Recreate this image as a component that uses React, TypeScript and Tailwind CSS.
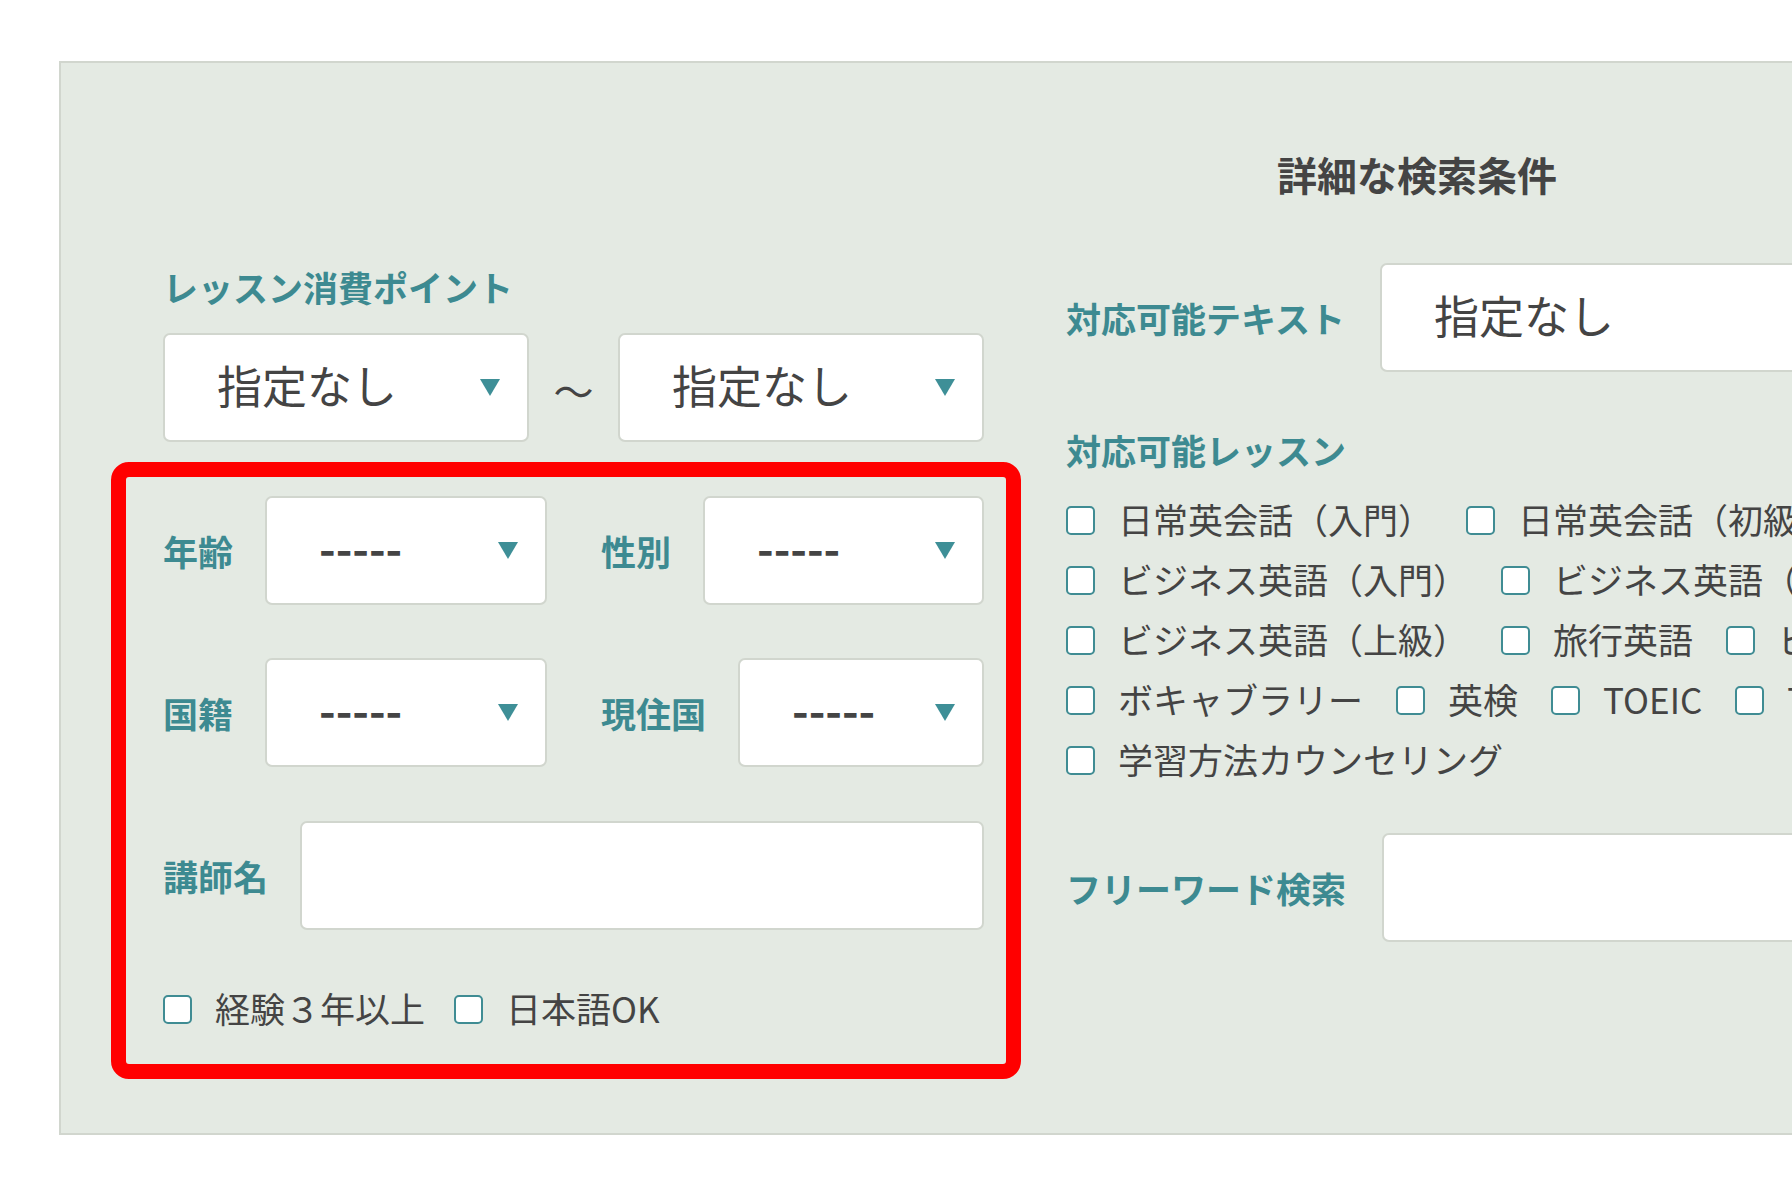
import React from 'react';

const font = "font-['Noto_Sans_CJK_JP','Noto_Sans',sans-serif]";

function Caret() {
  return (
    <svg width="20" height="17" viewBox="0 0 20 17" className="shrink-0">
      <path d="M0 0H20L10 17Z" fill="#3e8f97" />
    </svg>
  );
}

function Select({ value, className = '', dashes = false }: { value: string; className?: string; dashes?: boolean }) {
  return (
    <div className={`h-[109px] bg-white border-2 border-[#d1d6ce] rounded-[7px] flex items-center pl-[52px] pr-[27px] ${className}`}>
      <span className={`flex-1 whitespace-nowrap text-[#444] leading-none text-[45px] ${dashes ? 'font-semibold pb-[8px]' : 'pb-[6px]'}`}>{value}</span>
      <Caret />
    </div>
  );
}

function TextBox({ className = '' }: { className?: string }) {
  return <div className={`h-[109px] bg-white border-2 border-[#d1d6ce] rounded-[7px] ${className}`} />;
}

function Label({ children }: { children: React.ReactNode }) {
  return <span className="text-[35px] leading-none font-bold text-[#3d8a91] whitespace-nowrap shrink-0">{children}</span>;
}

function Check({ label, gap = 'mr-[33px]' }: { label: string; gap?: string }) {
  return (
    <label className={`flex items-center shrink-0 ${gap}`}>
      <span className="w-[29px] h-[29px] mt-[4px] bg-white border-2 border-[#3f8c93] rounded-[5px] shrink-0" />
      <span className="ml-[23px] text-[35px] leading-none text-[#444] whitespace-nowrap">{label}</span>
    </label>
  );
}

const lessonRows: string[][] = [
  ['日常英会話（入門）', '日常英会話（初級）', '日常英会話（中級）'],
  ['ビジネス英語（入門）', 'ビジネス英語（中級）', 'ビジネス英語（上級）'],
  ['ビジネス英語（上級）', '旅行英語', 'ビジネスメール'],
  ['ボキャブラリー', '英検', 'TOEIC', 'TOEFL'],
  ['学習方法カウンセリング'],
];

export default function App() {
  return (
    <div className={`w-[1792px] h-[1200px] overflow-hidden bg-white ${font}`}>
      <div className="ml-[59px] mt-[61px] w-[2400px] h-[1074px] bg-[#e4eae3] border-2 border-r-0 border-[#d1d6ce] flex">
        {/* left column */}
        <div className="ml-[102px] w-[821px] pt-[202px] shrink-0">
          <div className="h-[42px] flex items-center">
            <Label>レッスン消費ポイント</Label>
          </div>
          <div className="mt-[26px] flex items-center">
            <Select value="指定なし" className="w-[366px]" />
            <span className="flex-1 text-center text-[40px] text-[#444] leading-none pt-[4px]">〜</span>
            <Select value="指定なし" className="w-[366px]" />
          </div>

          <div className="mt-[20px] -ml-[52px] -mr-[37px] border-[15px] border-[#ff0000] rounded-[18px] pl-[37px] pr-[22px] pt-[19px] pb-[36px]">
            <div className="flex gap-[54px]">
              <div className="w-[384px] flex items-center gap-[32px]">
                <Label>年齢</Label>
                <Select value="-----" dashes className="flex-1" />
              </div>
              <div className="flex-1 flex items-center gap-[32px]">
                <Label>性別</Label>
                <Select value="-----" dashes className="flex-1" />
              </div>
            </div>
            <div className="mt-[53px] flex gap-[54px]">
              <div className="w-[384px] flex items-center gap-[32px]">
                <Label>国籍</Label>
                <Select value="-----" dashes className="flex-1" />
              </div>
              <div className="flex-1 flex items-center gap-[32px]">
                <Label>現住国</Label>
                <Select value="-----" dashes className="flex-1" />
              </div>
            </div>
            <div className="mt-[54px] flex items-center gap-[32px]">
              <Label>講師名</Label>
              <TextBox className="flex-1" />
            </div>
            <div className="mt-[56px] h-[42px] flex items-center">
              <Check label="経験３年以上" gap="mr-[29px]" />
              <Check label="日本語OK" />
            </div>
          </div>
        </div>

        {/* right column */}
        <div className="ml-[82px] pt-[87px] flex-1">
          <div className="w-[702px] h-[48px] flex items-center justify-center">
            <h2 className="text-[40px] leading-none font-bold text-[#444]">詳細な検索条件</h2>
          </div>
          <div className="mt-[65px] flex items-center gap-[35px]">
            <Label>対応可能テキスト</Label>
            <Select value="指定なし" className="w-[700px]" />
          </div>
          <div className="mt-[56px] h-[42px] flex items-center">
            <Label>対応可能レッスン</Label>
          </div>
          <div className="mt-[18px]">
            {lessonRows.map((row, i) => (
              <div key={i} className="h-[60px] flex items-center">
                {row.map((l) => (
                  <Check key={l} label={l} />
                ))}
              </div>
            ))}
          </div>
          <div className="mt-[45px] flex items-center gap-[36px]">
            <Label>フリーワード検索</Label>
            <TextBox className="w-[700px]" />
          </div>
        </div>
      </div>
    </div>
  );
}
